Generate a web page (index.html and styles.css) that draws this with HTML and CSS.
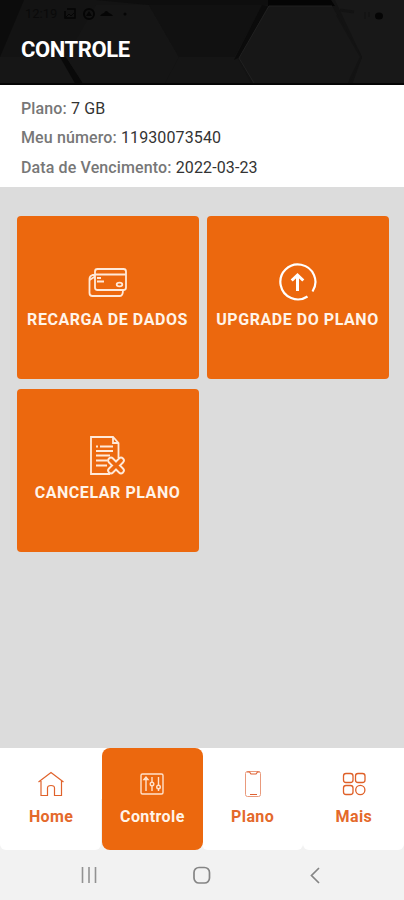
FILE: index.html
```html
<!DOCTYPE html>
<html lang="pt-BR">
<head>
    <meta charset="UTF-8">
    <meta name="viewport" content="width=device-width, initial-scale=1.0">
    <title>Controle</title>
    <link rel="stylesheet" href="styles.css">
</head>
<body>
    <header class="header">
      <svg class="header-bg" viewBox="0 0 404 85" preserveAspectRatio="none">
        <rect width="404" height="85" fill="#131313"/>
        <path d="M0 0H24L0 57Z" fill="#0c0c0c"/>
        <path d="M0 57H60L76 85H0Z" fill="#161616"/>
        <path d="M60 57L76 85H84L66 57Z" fill="#090909"/>
        <path d="M96 5H149L179 57L164 85H84L66 57Z" fill="#151515"/>
        <path d="M96 0H268V5H149Z" fill="#0e0e0e"/>
        <path d="M149 5H262L234 57H179Z" fill="#111"/>
        <path d="M179 57H237L252 85H164Z" fill="#151515"/>
        <path d="M262 5L268 6L240 57L234 60Z" fill="#0b0b0b"/>
        <path d="M268 0H331L335 6H268Z" fill="#050505"/>
        <path d="M335 0H404V85H352L362 57Z" fill="#181818"/>
        <path d="M269 6H332L361 57L347 85H254L239 58Z" fill="#171717"/>
        <path d="M254 83L239 58L269 6H332" fill="none" stroke="#202020"/>
        <path d="M337 15L361 57L350 80" fill="none" stroke="#131313" stroke-width="2"/>
        <path d="M0 84H404" stroke="#050505" stroke-width="2"/>
      </svg>
      <div class="status">
        <span class="clock">12:19</span>
        <svg width="66" height="14" viewBox="0 0 66 14">
          <path d="M5 2H13V11H3V4" fill="none" stroke="#050505" stroke-width="1.5"/>
          <path d="M4 10L7 7L9 9L12 6" fill="none" stroke="#050505"/>
          <circle cx="27" cy="7" r="5" fill="none" stroke="#050505" stroke-width="2"/>
          <path d="M24 9L27 4L30 9Z" fill="#050505"/>
          <path d="M38 9Q40 6 42 6Q44 2 47 6Q50 7 51 9Z" fill="#050505"/>
          <circle cx="63" cy="7" r="1.5" fill="#050505"/>
        </svg>
        <svg class="status-right" width="50" height="14" viewBox="0 0 50 14">
          <path d="M2 3L16 5" stroke="#131313" stroke-width="3"/>
          <path d="M27 5V12M31 5V10" stroke="#101010"/>
          <ellipse cx="41" cy="9" rx="4" ry="3.5" fill="#050505"/>
        </svg>
      </div>
      <h1 class="title">CONTROLE</h1>
    </header>

    <section class="info">
      <p><b>Plano:</b> 7 GB</p>
      <p><b>Meu número:</b> 11930073540</p>
      <p><b>Data de Vencimento:</b> 2022-03-23</p>
    </section>

    <main class="tiles">
      <a class="tile">
        <svg width="40" height="40" viewBox="0 0 40 40" fill="none" stroke="#ffe9d9" stroke-width="1.8">
          <rect x="7" y="7" width="31" height="21" rx="2.5"/>
          <path d="M7 12.5H38M9 16H13M9 19.5H16"/>
          <path d="M7 13H4.5Q1.5 14 1.5 17V31Q1.5 34 4.5 34H32Q35 34 35 28"/>
          <path d="M1.5 18L7 14.5"/>
          <ellipse cx="31.5" cy="22.5" rx="2.8" ry="1.8"/>
        </svg>
        <span>RECARGA DE DADOS</span>
      </a>
      <a class="tile">
        <svg width="40" height="40" viewBox="0 0 40 40" fill="none" stroke="#fff">
          <path d="M29.5 34.5A17.5 17.5 0 1 1 34.5 29.5" stroke-width="2.2"/>
          <path d="M19.500 29V14M13.700 18.500L19.500 13L25.300 18.500" stroke-width="3"/>
        </svg>
        <span>UPGRADE DO PLANO</span>
      </a>
      <a class="tile">
        <svg width="40" height="40" viewBox="0 0 40 40" fill="none" stroke="#ffe9d9" stroke-width="1.8">
          <path d="M22 39H3V2H25L30.5 8V23M25 2V8H30.5"/>
          <path d="M8 11.5H10M12 11.5H25M8 16H25M8 20.5H22M8 25.5H19M8 30.5H19"/>
          <path d="M23 25.500L33 35.500M33 25.500L23 35.500" stroke-width="7.5" stroke-linecap="round"/>
          <path d="M23 25.500L33 35.500M33 25.500L23 35.500" stroke="#ec680e" stroke-width="3.8" stroke-linecap="round"/>
        </svg>
        <span>CANCELAR PLANO</span>
      </a>
    </main>

    <nav class="tabs">
      <a class="tab">
        <svg width="28" height="28" viewBox="0 0 28 28" fill="none" stroke="#e0622b" stroke-width="1.2">
          <path d="M1.5 12L14 2.5L26.5 12M4 11V25.5H10.5V18Q10.5 15.5 14 15.5Q17.5 15.5 17.5 18V25.5H24.5V11"/>
        </svg>
        <span>Home</span>
      </a>
      <a class="tab active">
        <svg width="28" height="28" viewBox="0 0 28 28" fill="none" stroke="#ffe1cb" stroke-width="1.4">
          <rect x="3" y="4" width="22" height="20" rx="1.5"/>
          <path d="M8 7V21M14 7V12M14 16V21M20.5 7V15M20.5 19V21"/>
          <path d="M6 9.5L8 7L10 9.5Z" fill="#ffe1cb"/>
          <circle cx="14" cy="14" r="1.8"/>
          <circle cx="20.5" cy="17" r="1.8"/>
        </svg>
        <span>Controle</span>
      </a>
      <a class="tab">
        <svg width="28" height="28" viewBox="0 0 28 28" fill="none" stroke="#e99a7c">
          <rect x="6.5" y="1.5" width="15" height="25" rx="2"/>
          <path d="M8 2H10.5L12 4H17L18.5 2H20.5M11 24.5H18" stroke="#df6233" stroke-width="1.2"/>
        </svg>
        <span>Plano</span>
      </a>
      <a class="tab">
        <svg width="28" height="28" viewBox="0 0 28 28" fill="none" stroke="#df6028" stroke-width="1.3">
          <rect x="3.5" y="3.5" width="9.5" height="9" rx="2.5"/>
          <rect x="15.5" y="3.5" width="9.5" height="9" rx="2.5"/>
          <rect x="3.5" y="15.5" width="9.5" height="9" rx="2.5"/>
          <circle cx="20.3" cy="20" r="4.6"/>
        </svg>
        <span>Mais</span>
      </a>
    </nav>

    <footer class="system">
      <svg width="18" height="18" viewBox="0 0 18 18" stroke="#929292" stroke-width="1.6">
        <path d="M2.5 1V17M9 1V17M15.5 1V17"/>
      </svg>
      <svg width="18" height="18" viewBox="0 0 18 18" fill="none" stroke="#858585" stroke-width="1.7">
        <rect x="1" y="1.5" width="15.5" height="15.5" rx="5"/>
      </svg>
      <svg width="18" height="18" viewBox="0 0 18 18" fill="none" stroke="#858585" stroke-width="1.7">
        <path d="M13 2L5.5 9.5L13 17"/>
      </svg>
    </footer>
</body>
</html>
```

FILE: styles.css
```css
* {
  box-sizing: border-box;
}
body {
  display: flex;
  flex-direction: column;
  height: 900px;
  margin: 0;
  font-family: Roboto, sans-serif;
  background: #dcdcdc;
}
.header {
  position: relative;
  height: 85px;
  color: #fff;
}
.header-bg {
  position: absolute;
  width: 100%;
  height: 100%;
  z-index: -1;
}
.status {
  display: flex;
  align-items: center;
  height: 27px;
  padding: 0 16px 0 25px;
}
.clock {
  width: 37px;
  color: #0a0a0a;
  font-size: 13px;
}
.status-right {
  margin-left: auto;
}
.title {
  margin: 9px 0 0 21px;
  font-size: 22px;
  line-height: 28px;
  font-weight: bold;
  letter-spacing: -0.4px;
}
.info {
  height: 102px;
  padding: 9px 21px;
  background: #fff;
}
.info p {
  margin: 0;
  font-size: 16px;
  line-height: 29.3px;
  letter-spacing: 0.12px;
  color: #333;
}
.info b {
  font-weight: 500;
  color: #777;
}
.tiles {
  flex: 1;
  display: grid;
  grid-template-columns: 182px 182px;
  grid-auto-rows: 162.5px;
  align-content: start;
  gap: 10.5px 8px;
  padding: 29px 16.5px;
}
.tile {
  display: flex;
  flex-direction: column;
  align-items: center;
  padding-top: 46px;
  border-radius: 4px;
  background: #ec680e;
  color: #fff4e9;
  font-size: 16px;
  line-height: 20px;
  font-weight: bold;
  letter-spacing: 0.55px;
  white-space: nowrap;
}
.tile span {
  margin-top: 8px;
}
.tabs {
  display: flex;
  height: 102px;
  background: linear-gradient(#fff 50%, #f2f2f2 50%);
}
.tab {
  flex: 1;
  display: flex;
  flex-direction: column;
  align-items: center;
  padding: 22px 0 0 1px;
  border-radius: 0 0 6px 6px;
  background: #fff;
  color: #e4692b;
  font-size: 16px;
  line-height: 20px;
  font-weight: bold;
  letter-spacing: 0.4px;
}
.tab span {
  margin-top: 9px;
}
.tab.active {
  margin-left: 1px;
  margin-right: -1px;
  padding-left: 0;
  border-radius: 8px;
  background: #ec680e;
  color: #fff4e9;
  z-index: 1;
}
.system {
  display: flex;
  justify-content: space-between;
  height: 50px;
  padding: 16px 80px;
  background: #f2f2f2;
}
```
